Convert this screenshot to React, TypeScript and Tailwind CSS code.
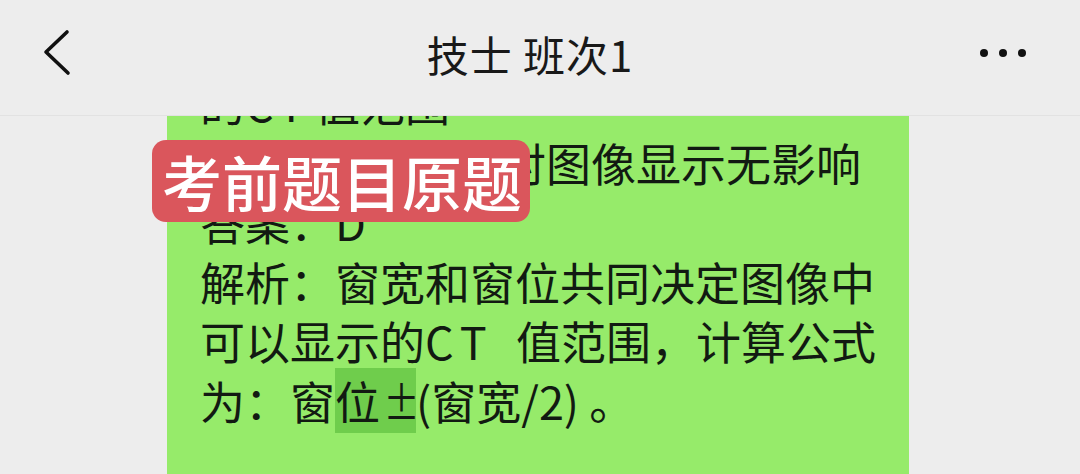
import React from "react";

export default function App() {
  const font = { fontFamily: '"Noto Sans CJK SC", "Noto Sans", sans-serif' };
  return (
    <div
      className="relative w-[1080px] h-[474px] overflow-hidden bg-[#ededed] flex flex-col"
      style={font}
    >
      <header className="relative z-10 h-[116px] shrink-0 bg-[#ededed] border-b border-[#e2e2e2] flex items-center justify-between px-[40px]">
        <button className="w-[40px] h-[60px] flex items-center justify-start -mt-[10px]">
          <svg width="34" height="50" viewBox="0 0 34 50" fill="none">
            <path d="M27 4 L6 24 L28 45" stroke="#111" strokeWidth="3.6" strokeLinecap="round" strokeLinejoin="round" />
          </svg>
        </button>
        <h1 className="text-[42px] font-normal text-[#191919] leading-none -mt-[8px] tracking-[1px]">
          技士 班次1
        </h1>
        <div className="flex items-center gap-[11px] -mt-[10px] mr-[14px]">
          <span className="w-[8px] h-[8px] rounded-full bg-[#111]" />
          <span className="w-[8px] h-[8px] rounded-full bg-[#111]" />
          <span className="w-[8px] h-[8px] rounded-full bg-[#111]" />
        </div>
      </header>

      <main className="flex-1 overflow-hidden pl-[167px]">
        <div className="w-[742px] h-full bg-[#96eb6a] overflow-hidden px-[33px]">
          <div className="-mt-[43px] text-[45px] leading-[59.5px] text-[#121a12] whitespace-nowrap">
            <div>
              的<span className="inline-block w-[70px] tracking-[5px]">CT</span>值范围
            </div>
            <div>D：窗宽和窗位对图像显示无影响</div>
            <div>答案：D</div>
            <div>解析：窗宽和窗位共同决定图像中</div>
            <div>
              可以显示的<span className="inline-block w-[91px] tracking-[7px]">CT</span>值范围，计算公式
            </div>
            <div>
              为：窗<span className="bg-[#6fcd4c]">位<span className="inline-block w-[36px] text-center scale-x-[0.8]">±</span></span>(窗宽/2) 。
            </div>
          </div>
        </div>
      </main>

      <div className="absolute left-[152px] top-[140px] w-[378px] h-[82px] rounded-[14px] bg-[#da565c] flex items-center pl-[10px] z-20">
        <span className="text-[60px] font-medium text-white leading-none tracking-[0px]">
          考前题目原题
        </span>
      </div>
    </div>
  );
}
